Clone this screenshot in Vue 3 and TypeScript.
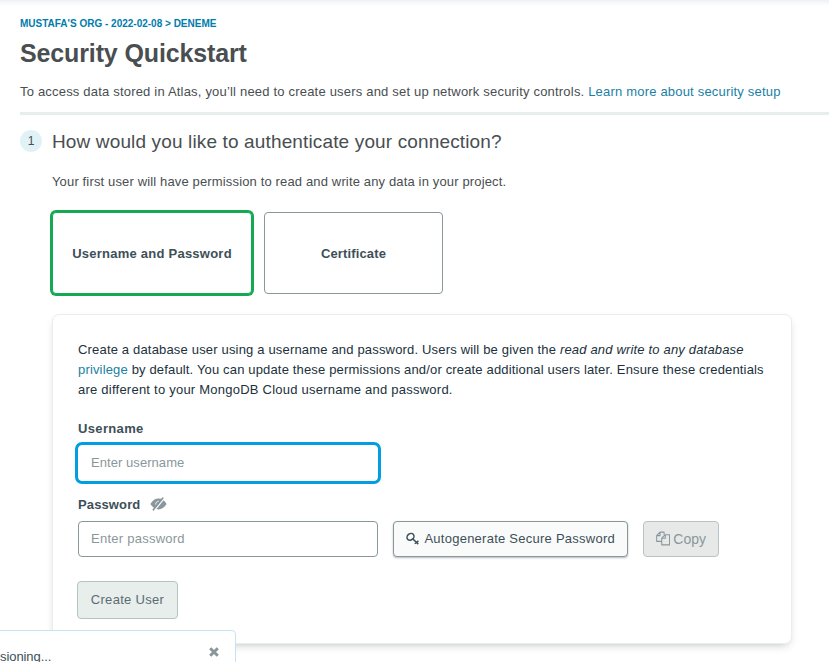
<script setup lang="ts">
import { ref } from 'vue'

type Method = 'password' | 'certificate'

const method = ref<Method>('password')
const username = ref('')
const password = ref('')
</script>

<template>
  <div class="page">
    <header class="header">
      <nav class="crumbs">MUSTAFA'S ORG - 2022-02-08 &gt; DENEME</nav>
      <h1 class="title">Security Quickstart</h1>
      <p class="intro">
        To access data stored in Atlas, you’ll need to create users and set up network security controls.
        <a class="link">Learn more about security setup</a>
      </p>
    </header>

    <section class="step">
      <div class="step-head">
        <span class="badge">1</span>
        <h2 class="question">How would you like to authenticate your connection?</h2>
      </div>
      <div class="step-body">
        <p class="hint">Your first user will have permission to read and write any data in your project.</p>
        <div class="methods">
          <button class="method" :class="{ selected: method === 'password' }" @click="method = 'password'">
            <span>Username and Password</span>
          </button>
          <button class="method narrow" :class="{ selected: method === 'certificate' }" @click="method = 'certificate'">
            <span>Certificate</span>
          </button>
        </div>

        <div class="panel">
          <p class="about">
            <span class="line">Create a database user using a username and password. Users will be given the <em>read and write to any database</em></span>
            <span class="line second-line"><a class="link">privilege</a> by default. You can update these permissions and/or create additional users later. Ensure these credentials</span>
            <span class="line last">are different to your MongoDB Cloud username and password.</span>
          </p>

          <label class="label" for="user"><span>Username</span></label>
          <input id="user" v-model="username" class="input focused" placeholder="Enter username" />

          <label class="label second" for="pass">
            <span>Password</span>
            <svg class="eye" width="17" height="14" viewBox="0 0 17 14">
              <path d="M.4 7Q3.800 1.600 8.500 1.600T16.600 7Q13.200 12.400 8.500 12.400T.4 7z" fill="#89979b" />
              <path d="M5.800 7.600A2.900 2.900 0 0 1 8.700 4.200" fill="none" stroke="#fff" stroke-width=".9" />
              <path d="M3 13.400L13.400.6" stroke="#89979b" stroke-width="1.900" />
              <path d="M4.500 13.600L14.600 1.100" stroke="#fff" stroke-width="1.100" />
            </svg>
          </label>
          <div class="row">
            <input id="pass" v-model="password" class="input pass" placeholder="Enter password" />
            <button class="btn auto">
              <svg width="14" height="14" viewBox="0 0 14 14" fill="none" stroke="#3d4f58">
                <ellipse cx="4.700" cy="4.700" rx="3.900" ry="3.200" transform="rotate(-40 4.700 4.700)" stroke-width="1.600" />
                <path d="M7.200 7L12.800 12.300M10.700 10.300L9.200 12M12.900 8.900L11 10.900" stroke-width="1.600" />
              </svg>
              <span>Autogenerate Secure Password</span>
            </button>
            <button class="btn copy" disabled>
              <svg width="15" height="15" viewBox="0 0 15 15" fill="none" stroke="#89979b" stroke-width="1.100" stroke-linejoin="round">
                <path d="M6 10.500H.7V4.500L4.200.8H8.500V3.500M4.200.8V4.500H.7" />
                <path d="M9.700 3.500H14.200V14.200H6V7.200zM9.700 3.500V7.200H6" />
              </svg>
              <span>Copy</span>
            </button>
          </div>

          <button class="btn create" disabled><span>Create User</span></button>
        </div>
      </div>
    </section>

    <aside class="toast">
      <span class="toast-text">sioning...</span>
      <svg width="10" height="10" viewBox="0 0 10 10">
        <path d="M1.200 1.200L8.800 8.800M8.800 1.200L1.200 8.800" stroke="#89979b" stroke-width="3" />
      </svg>
    </aside>
  </div>
</template>

<style>
body {
  overflow: hidden;
  background: #fff;
}
</style>

<style scoped>
.page {
  position: relative;
  box-sizing: border-box;
  width: 829px;
  height: 662px;
  padding: 14px 0 0 20px;
  overflow: hidden;
  background: linear-gradient(#edf1f3 0, #f1f4f6 1px, #fff 6px);
  color: #494e51;
  font: 13px/20px "Liberation Sans", Arial, sans-serif;
  white-space: nowrap;
}
h1, h2, p {
  margin: 0;
  font-weight: 400;
}
button, input {
  box-sizing: border-box;
  font: inherit;
}
.header {
  height: 98px;
  border-bottom: 3px solid #e7eeec;
}
.crumbs {
  color: #007cad;
  font-size: 10px;
  font-weight: 700;
  line-height: 20px;
}
.title {
  color: #494e51;
  font-size: 25px;
  font-weight: 700;
  letter-spacing: -0.13px;
  line-height: 38px;
}
.intro {
  margin-top: 10px;
  letter-spacing: 0.194px;
}
.link {
  color: #1a7fa3;
}
.step-head {
  display: flex;
  gap: 10px;
  align-items: center;
  height: 22px;
  margin-top: 15px;
}
.badge {
  width: 22px;
  height: 22px;
  border-radius: 50%;
  background: #e1f2f6;
  font-size: 12px;
  line-height: 22px;
  text-align: center;
}
.question {
  padding-top: 2px;
  color: #494e51;
  font-size: 19px;
  letter-spacing: 0.14px;
  line-height: 22px;
}
.step-body {
  padding-left: 32px;
}
.hint {
  margin-top: 20px;
  letter-spacing: 0.147px;
}
.methods {
  display: flex;
  gap: 12px;
  margin-top: 20px;
}
.method {
  width: 200px;
  height: 82px;
  padding: 2px 0 0;
  border: 1px solid #89979b;
  border-radius: 4px;
  background: #fff;
  color: #3d4f58;
  font-weight: 700;
  letter-spacing: 0.24px;
}
.method.narrow {
  width: 179px;
  letter-spacing: 0.15px;
}
.method.selected {
  border-color: #13aa52;
  box-shadow: 0 0 0 2px #13aa52;
}
.panel {
  box-sizing: border-box;
  width: 740px;
  height: 330px;
  margin-top: 20px;
  padding: 25px 25px 0;
  border: 1px solid #e7eeec;
  border-radius: 7px;
  background: #fff;
  box-shadow: 0 4px 10px -4px rgba(6, 22, 33, 0.3);
}
.about {
  color: #21313c;
}
.line {
  display: block;
  letter-spacing: 0.175px;
}
.line.second-line {
  letter-spacing: 0.16px;
}
.line.last {
  letter-spacing: 0.235px;
}
.label {
  display: flex;
  gap: 10px;
  align-items: center;
  height: 20px;
  margin-top: 19px;
  color: #3d4f58;
  font-weight: 700;
  letter-spacing: 0.35px;
}
.label.second {
  margin-top: 14px;
  letter-spacing: 0.12px;
}
.input {
  display: block;
  width: 300px;
  height: 36px;
  margin: 0;
  padding: 0 12px 2px;
  border: 1px solid #89979b;
  border-radius: 4px;
  outline: none;
  background: #fff;
  letter-spacing: 0.06px;
}
.input.pass {
  letter-spacing: 0.25px;
}
.input::placeholder {
  color: #89979b;
  opacity: 1;
}
.input.focused {
  margin-top: 6px;
  border-color: #fff;
  box-shadow: 0 0 0 3px #019ee2;
}
.row {
  display: flex;
  gap: 15px;
  margin-top: 6px;
}
.eye {
  margin-top: -2px;
}
.btn {
  display: flex;
  align-items: center;
  height: 36px;
  padding: 0 12px;
  border: 1px solid #b8c4c2;
  border-radius: 4px;
  background: #e7eeec;
  color: #5d6c74;
}
.auto {
  gap: 5px;
  width: 235px;
  border-color: #89979b;
  background: #f9fbfa;
  color: #3d4f58;
  letter-spacing: 0.25px;
  box-shadow: 0 1px 2px rgba(6, 22, 33, 0.3);
}
.copy {
  gap: 3px;
  width: 76px;
  background: #e7e9e8;
  color: #89979b;
  font-size: 14px;
  letter-spacing: 0;
}
.copy svg {
  margin-top: -2px;
}
.create {
  justify-content: center;
  width: 101px;
  height: 38px;
  margin: 24px 0 0 -1px;
  letter-spacing: 0.3px;
}
.toast {
  position: absolute;
  bottom: -20px;
  left: -10px;
  display: flex;
  box-sizing: border-box;
  justify-content: space-between;
  width: 246px;
  height: 52px;
  padding: 16px 16px 0 9px;
  border: 1px solid #c5e4f2;
  border-radius: 4px;
  background: #fff;
  color: #3d4f58;
}
.toast-text {
  letter-spacing: -0.08px;
}
</style>
